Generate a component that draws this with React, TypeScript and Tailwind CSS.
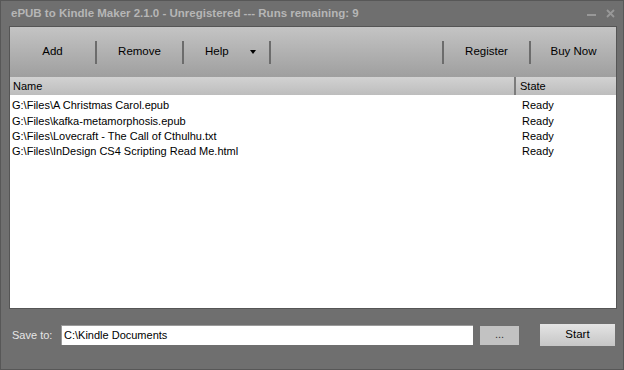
import { type ReactNode } from 'react';

const files = [
  'G:\\Files\\A Christmas Carol.epub',
  'G:\\Files\\kafka-metamorphosis.epub',
  'G:\\Files\\Lovecraft - The Call of Cthulhu.txt',
  'G:\\Files\\InDesign CS4 Scripting Read Me.html',
];

function ToolButton({ children }: { children: ReactNode }) {
  return (
    <div className="flex h-full w-[85px] items-center justify-center text-[11.5px] text-black">
      {children}
    </div>
  );
}

function Separator() {
  return <div className="h-[23px] w-[2px] bg-[#6c6c6c]" />;
}

export default function App() {
  return (
    <div
      className="flex h-[370px] w-[624px] flex-col border border-[#575757] bg-[#6f6f6f]"
      style={{ fontFamily: '"Liberation Sans", Arial, sans-serif' }}
    >
      {/* title bar */}
      <div className="flex h-[25px] items-center pl-[10px] pr-[8px]">
        <span className="text-[11.5px] font-bold text-[#b6b6b6]">
          ePUB to Kindle Maker 2.1.0 - Unregistered --- Runs remaining: 9
        </span>
        <div className="ml-auto flex items-center gap-[10px] text-[#989898]">
          <svg width="9" height="9" viewBox="0 0 9 9">
            <rect x="0" y="5" width="9" height="2" fill="currentColor" />
          </svg>
          <svg width="9" height="9" viewBox="0 0 9 9">
            <path d="M1 1 L8 8 M8 1 L1 8" stroke="currentColor" strokeWidth="1.8" />
          </svg>
        </div>
      </div>

      {/* main panel */}
      <div className="ml-[8px] mr-[6px] flex flex-col border border-[#555555]">
        <div className="flex h-[50px] items-center bg-gradient-to-b from-[#c4c4c4] to-[#9f9f9f]">
          <ToolButton>Add</ToolButton>
          <Separator />
          <ToolButton>Remove</ToolButton>
          <Separator />
          <div className="flex h-full w-[85px] items-center pl-[21px] text-[11.5px] text-black">
            <span>Help</span>
            <svg className="ml-[21px]" width="6" height="4" viewBox="0 0 6 4">
              <path d="M0 0 L6 0 L3 4 Z" fill="#000" />
            </svg>
          </div>
          <Separator />
          <div className="flex-1" />
          <Separator />
          <ToolButton>Register</ToolButton>
          <Separator />
          <ToolButton>Buy Now</ToolButton>
        </div>

        <div className="flex h-[18px] bg-gradient-to-b from-[#d2d2d2] to-[#bdbdbd] text-[11px] text-black">
          <div className="flex w-[506px] items-center border-r-2 border-[#7c7c7c] pl-[3px]">Name</div>
          <div className="flex flex-1 items-center pl-[4px]">State</div>
        </div>

        <div className="flex h-[213px] flex-col bg-white pt-[3px] text-[11px] text-black">
          {files.map((f) => (
            <div key={f} className="flex h-[15.3px] items-center">
              <div className="w-[508px] pl-[2px]">{f}</div>
              <div className="pl-[4px]">Ready</div>
            </div>
          ))}
        </div>
      </div>

      {/* bottom bar */}
      <div className="flex items-center pl-[11px] pt-[15px]">
        <span className="w-[49px] text-[11px] text-[#e6e6e6]">Save to:</span>
        <div className="flex h-[20px] w-[412px] items-center border-l border-t border-[#9a9a9a] bg-white pl-[2px] text-[11px] text-black">
          C:\Kindle Documents
        </div>
        <div className="ml-[7px] flex h-[19px] w-[39px] items-center justify-center bg-[#c2c2c2] pb-[2px] text-[11px] text-[#333]">
          ...
        </div>
        <div className="ml-[21px] flex h-[22px] w-[75px] items-center justify-center bg-gradient-to-b from-[#e4e4e4] to-[#c6c6c6] text-[11.5px] text-black">
          Start
        </div>
      </div>
    </div>
  );
}
